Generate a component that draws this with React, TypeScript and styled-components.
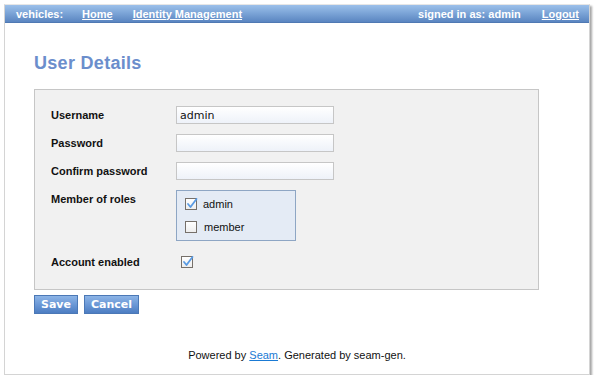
import React from "react";
import styled, { createGlobalStyle } from "styled-components";

const Global = createGlobalStyle`
  html, body { margin: 0; padding: 0; background: #ffffff; }
  body { font-family: "Liberation Sans", Arial, sans-serif; }
  * { box-sizing: border-box; }
`;

const Window = styled.div`
  margin: 4px 0 0 4px;
  width: 586px;
  height: 371px;
  border: 1px solid #d4d4d4;
  border-top-color: #e6e6e6;
  background: #fff;
  box-shadow: 2px 2px 2px rgba(0, 0, 0, 0.35);
  display: flex;
  flex-direction: column;
`;

const Header = styled.div`
  height: 18px;
  display: flex;
  align-items: center;
  padding: 0 10px 0 11px;
  background: linear-gradient(#9cc0ea, #7aa3d6 50%, #5a85c1);
  color: #fff;
  font: bold 11px "Liberation Sans", Arial, sans-serif;
  border-bottom: 1px solid #4f79b3;
`;

const Brand = styled.span`
  margin-right: 19px;
`;

const NavLink = styled.a<{ $gap?: number }>`
  color: #fff;
  text-decoration: underline;
  margin-right: ${(p) => p.$gap ?? 0}px;
  cursor: pointer;
`;

const Spacer = styled.div`
  flex: 1;
`;

const SignedIn = styled.span`
  margin-right: 21px;
`;

const Content = styled.div`
  padding: 0 0 0 29px;
  display: flex;
  flex-direction: column;
  flex: 1;
`;

const Title = styled.h1`
  margin: 30px 0 0 0;
  font: bold 18px/21px "Liberation Sans", Arial, sans-serif;
  color: #6b8ecc;
  letter-spacing: 0.3px;
`;

const Panel = styled.div`
  margin-top: 15px;
  width: 505px;
  height: 201px;
  background: #f1f1f1;
  border: 1px solid #c6c6c6;
  padding: 16px 0 0 16px;
  display: flex;
  flex-direction: column;
  gap: 10px;
`;

const Row = styled.div<{ $top?: boolean; $mt?: number }>`
  display: flex;
  align-items: ${(p) => (p.$top ? "flex-start" : "center")};
  min-height: 18px;
  margin-top: ${(p) => p.$mt ?? 0}px;
`;

const Label = styled.label<{ $pt?: number }>`
  width: 125px;
  flex: none;
  font: bold 11px "Liberation Sans", Arial, sans-serif;
  color: #111;
  padding-top: ${(p) => p.$pt ?? 0}px;
`;

const Input = styled.input`
  width: 158px;
  height: 18px;
  border: 1px solid #c6c6c6;
  background: linear-gradient(#ffffff, #eef2f9);
  font: 11px "DejaVu Sans", sans-serif;
  color: #111;
  padding: 0 3px;
  margin: 0;
  outline: none;
`;

const RolesBox = styled.div`
  width: 120px;
  height: 51px;
  border: 1px solid #8ea6c4;
  background: #e4ebf5;
  padding: 4px 0 0 8px;
  display: flex;
  flex-direction: column;
  gap: 5px;
`;

const RoleItem = styled.div<{ $textGap: number }>`
  display: flex;
  align-items: center;
  height: 18px;
  gap: ${(p) => p.$textGap}px;
  font: 11px "Liberation Sans", Arial, sans-serif;
  color: #111;
`;

const Box = styled.span<{ $ml?: number }>`
  width: 12px;
  height: 12px;
  flex: none;
  border: 1px solid #76706a;
  background: linear-gradient(#ffffff, #eeeeee);
  margin-left: ${(p) => p.$ml ?? 0}px;
  position: relative;
  display: inline-block;
`;

const Check = styled.svg`
  position: absolute;
  left: 0px;
  top: -2px;
`;

const CheckBox = ({ checked, ml }: { checked?: boolean; ml?: number }) => (
  <Box $ml={ml}>
    {checked && (
      <Check width="12" height="13" viewBox="0 0 12 13">
        <path d="M2 7 L4.5 10 L10.5 2" stroke="#5a9be3" strokeWidth="1.8" fill="none" strokeLinecap="round" strokeLinejoin="round" />
      </Check>
    )}
  </Box>
);

const Actions = styled.div`
  display: flex;
  gap: 6px;
  margin-top: 5px;
`;

const Button = styled.button`
  height: 19px;
  padding: 0 6px;
  border: 1px solid #4b78b6;
  background: linear-gradient(#8cb4e6, #6b98d6 50%, #4d7dc2);
  color: #fff;
  font: bold 11px "DejaVu Sans", sans-serif;
  cursor: pointer;
  line-height: 17px;
`;

const Footer = styled.div`
  margin-top: auto;
  margin-left: -29px;
  padding-bottom: 13px;
  text-align: center;
  font: 11px "Liberation Sans", Arial, sans-serif;
  color: #111;
`;

const FooterLink = styled.a`
  color: #1a7ad4;
  text-decoration: underline;
`;

export default function App() {
  return (
    <>
      <Global />
      <Window>
        <Header>
          <Brand>vehicles:</Brand>
          <NavLink $gap={20}>Home</NavLink>
          <NavLink>Identity Management</NavLink>
          <Spacer />
          <SignedIn>signed in as: admin</SignedIn>
          <NavLink>Logout</NavLink>
        </Header>
        <Content>
          <Title>User Details</Title>
          <Panel>
            <Row>
              <Label>Username</Label>
              <Input defaultValue="admin" />
            </Row>
            <Row>
              <Label>Password</Label>
              <Input type="password" />
            </Row>
            <Row>
              <Label>Confirm password</Label>
              <Input type="password" />
            </Row>
            <Row $top>
              <Label $pt={3}>Member of roles</Label>
              <RolesBox>
                <RoleItem $textGap={6}>
                  <CheckBox checked />
                  admin
                </RoleItem>
                <RoleItem $textGap={7}>
                  <CheckBox />
                  member
                </RoleItem>
              </RolesBox>
            </Row>
            <Row $mt={2}>
              <Label>Account enabled</Label>
              <CheckBox checked ml={5} />
            </Row>
          </Panel>
          <Actions>
            <Button>Save</Button>
            <Button>Cancel</Button>
          </Actions>
          <Footer>
            Powered by <FooterLink>Seam</FooterLink>. Generated by seam-gen.
          </Footer>
        </Content>
      </Window>
    </>
  );
}
